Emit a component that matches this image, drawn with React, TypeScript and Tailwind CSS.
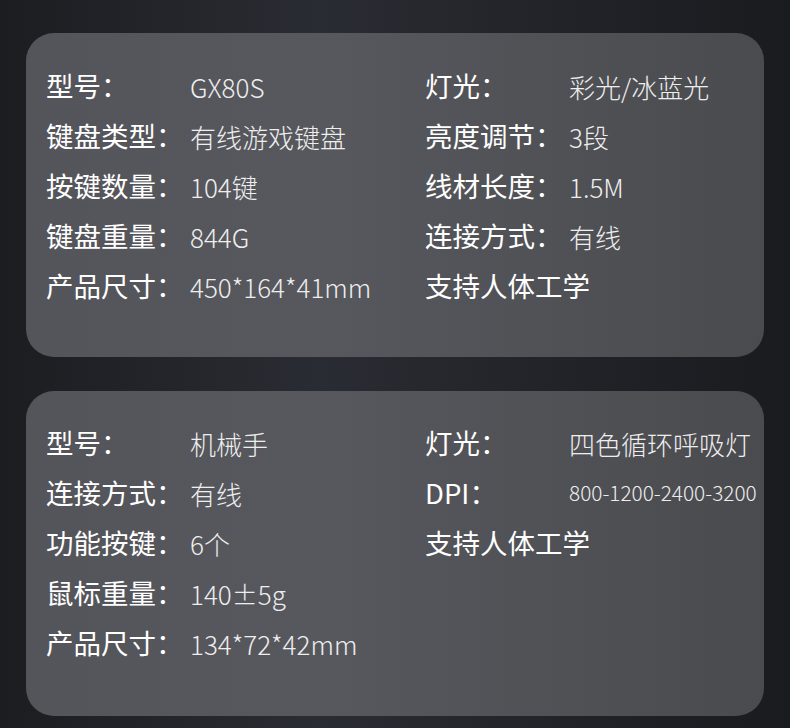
type Spec = { label: string; value?: string; small?: boolean };

const keyboardLeft: Spec[] = [
  { label: "型号：", value: "GX80S" },
  { label: "键盘类型：", value: "有线游戏键盘" },
  { label: "按键数量：", value: "104键" },
  { label: "键盘重量：", value: "844G" },
  { label: "产品尺寸：", value: "450*164*41mm" },
];

const keyboardRight: Spec[] = [
  { label: "灯光：", value: "彩光/冰蓝光" },
  { label: "亮度调节：", value: "3段" },
  { label: "线材长度：", value: "1.5M" },
  { label: "连接方式：", value: "有线" },
  { label: "支持人体工学" },
];

const mouseLeft: Spec[] = [
  { label: "型号：", value: "机械手" },
  { label: "连接方式：", value: "有线" },
  { label: "功能按键：", value: "6个" },
  { label: "鼠标重量：", value: "140±5g" },
  { label: "产品尺寸：", value: "134*72*42mm" },
];

const mouseRight: Spec[] = [
  { label: "灯光：", value: "四色循环呼吸灯" },
  { label: "DPI：", value: "800-1200-2400-3200", small: true },
  { label: "支持人体工学" },
];

function Row({ spec }: { spec: Spec }) {
  return (
    <div className="flex h-[50px] items-center whitespace-nowrap">
      <span className="w-[144px] shrink-0 text-[27.5px] font-normal text-white">
        {spec.label}
      </span>
      {spec.value ? (
        <span
          className={
            spec.small
              ? "text-[20.8px] font-light text-[#eeeeee]"
              : "text-[26px] font-light text-[#eeeeee]"
          }
        >
          {spec.value}
        </span>
      ) : null}
    </div>
  );
}

function Card({ left, right, className }: { left: Spec[]; right: Spec[]; className: string }) {
  return (
    <div
      className={
        "mx-[26px] grid grid-cols-[379px_1fr] rounded-[28px] bg-gradient-to-r from-[#54555a] via-[#57585d] via-40% to-[#4a4b4f] pl-[20px] " +
        className
      }
    >
      <div className="flex flex-col">
        {left.map((s) => (
          <Row key={s.label} spec={s} />
        ))}
      </div>
      <div className="flex flex-col">
        {right.map((s) => (
          <Row key={s.label} spec={s} />
        ))}
      </div>
    </div>
  );
}

export default function App() {
  return (
    <div
      className="h-[728px] w-[790px] overflow-hidden bg-gradient-to-r from-[#1c1d21] via-[#2a2c33] via-40% to-[#1a1b1f] pt-[33px]"
      style={{ fontFamily: '"Noto Sans CJK SC", "Noto Sans", sans-serif' }}
    >
      <Card left={keyboardLeft} right={keyboardRight} className="h-[324px] pt-[28px]" />
      <Card left={mouseLeft} right={mouseRight} className="mt-[34px] h-[325px] pt-[27px]" />
    </div>
  );
}
